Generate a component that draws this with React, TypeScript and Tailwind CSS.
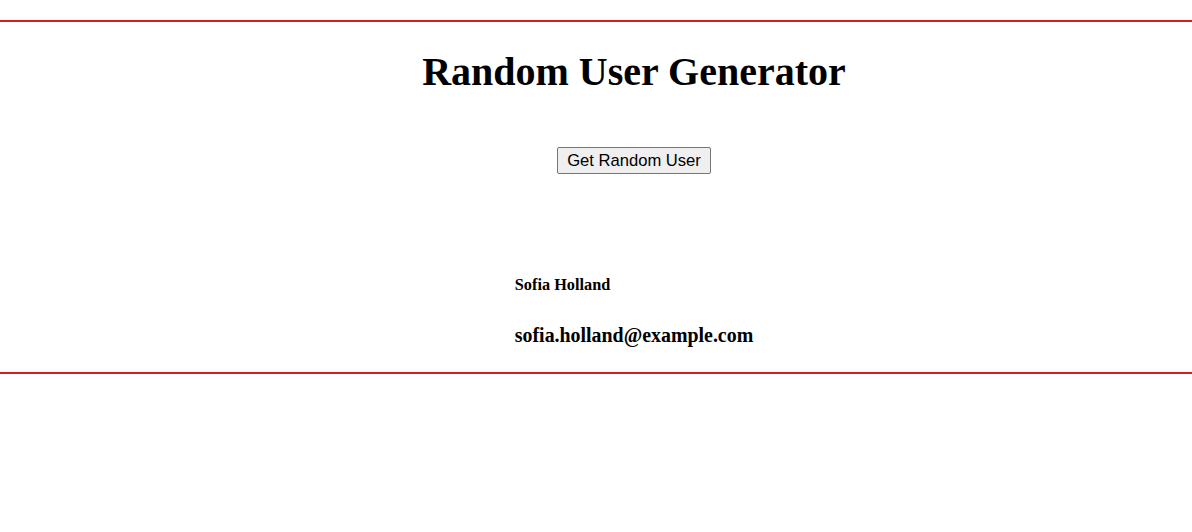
import * as React from "react";

type User = {
  name: string;
  email: string;
};

const user: User = {
  name: "Sofia Holland",
  email: "sofia.holland@example.com",
};

const UserCard: React.FC<{ user: User }> = ({ user }) => (
  <div className="mt-[102px] inline-block text-left">
    <h4 className="text-[16.3px] font-bold leading-[18px]">{user.name}</h4>
    <h3 className="mt-[30px] text-[19.9px] font-bold leading-[22px]">
      {user.email}
    </h3>
  </div>
);

export default function App() {
  return (
    <div className="min-h-[532px] bg-white pt-[20px] text-black">
      <div
        className="border-y-2 border-[#cc2020] pb-[23px] pl-[76px] text-center"
        style={{ fontFamily: '"Liberation Serif", "Times New Roman", serif' }}
      >
        <h1 className="pt-[28px] text-[40px] font-bold leading-[44px]">
          Random User Generator
        </h1>

        <div className="mt-[53px] h-[27px]">
          <button
            className="h-[27px] rounded-[2px] border border-[#767676] bg-[#efefef] px-[9px] text-[16.6px] leading-[19px] text-black"
            style={{ fontFamily: '"Liberation Sans", Arial, sans-serif' }}
          >
            Get Random User
          </button>
        </div>

        <UserCard user={user} />
      </div>
    </div>
  );
}
